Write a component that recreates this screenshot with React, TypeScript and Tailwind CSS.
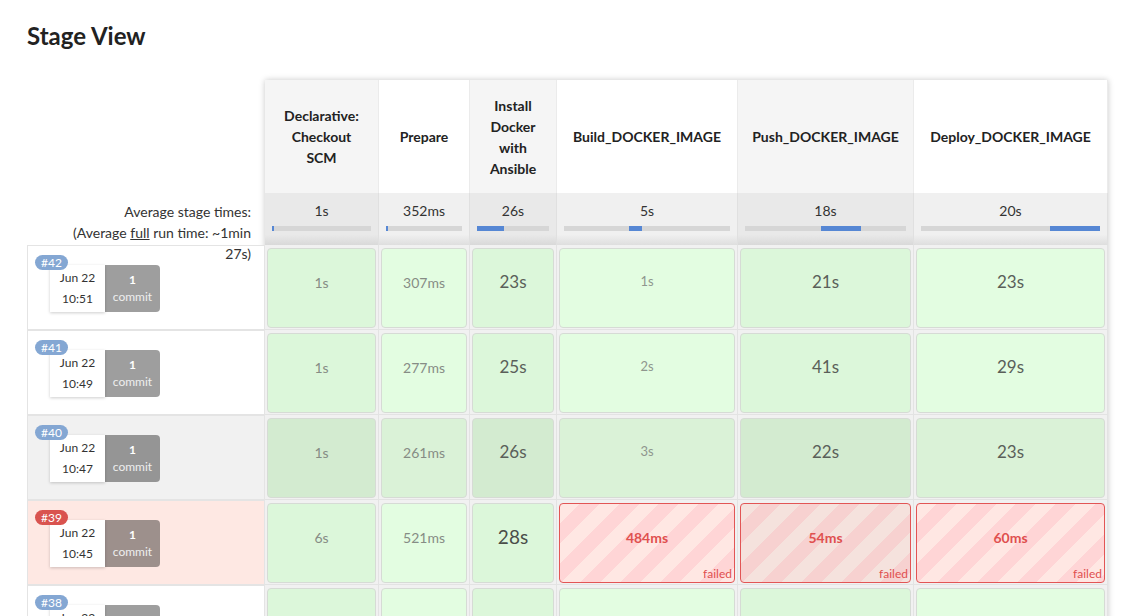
import React from "react";

type Stage = { name: string; w: string; avg: string; bar: [number, number]; odd: boolean };

const stages: Stage[] = [
  { name: "Declarative: Checkout SCM", w: "w-[114px]", avg: "1s", bar: [0, 0.02], odd: true },
  { name: "Prepare", w: "w-[91px]", avg: "352ms", bar: [0, 0.03], odd: false },
  { name: "Install Docker with Ansible", w: "w-[87px]", avg: "26s", bar: [0, 0.38], odd: true },
  { name: "Build_DOCKER_IMAGE", w: "w-[181px]", avg: "5s", bar: [0.39, 0.08], odd: false },
  { name: "Push_DOCKER_IMAGE", w: "w-[176px]", avg: "18s", bar: [0.47, 0.25], odd: true },
  { name: "Deploy_DOCKER_IMAGE", w: "w-[194px]", avg: "20s", bar: [0.72, 0.28], odd: false },
];

// s = tiny gray, m = gray, l = big, xl = bigger
type Cell = { t: string; size: "s" | "m" | "l" | "xl"; failed?: boolean };

type Run = {
  id: string;
  date: string;
  time: string;
  kind: "ok" | "hover" | "failed";
  cells: Cell[];
};

const runs: Run[] = [
  {
    id: "#42", date: "Jun 22", time: "10:51", kind: "ok",
    cells: [
      { t: "1s", size: "m" }, { t: "307ms", size: "m" }, { t: "23s", size: "l" },
      { t: "1s", size: "s" }, { t: "21s", size: "l" }, { t: "23s", size: "l" },
    ],
  },
  {
    id: "#41", date: "Jun 22", time: "10:49", kind: "ok",
    cells: [
      { t: "1s", size: "m" }, { t: "277ms", size: "m" }, { t: "25s", size: "l" },
      { t: "2s", size: "s" }, { t: "41s", size: "l" }, { t: "29s", size: "l" },
    ],
  },
  {
    id: "#40", date: "Jun 22", time: "10:47", kind: "hover",
    cells: [
      { t: "1s", size: "m" }, { t: "261ms", size: "m" }, { t: "26s", size: "l" },
      { t: "3s", size: "s" }, { t: "22s", size: "l" }, { t: "23s", size: "l" },
    ],
  },
  {
    id: "#39", date: "Jun 22", time: "10:45", kind: "failed",
    cells: [
      { t: "6s", size: "m" }, { t: "521ms", size: "m" }, { t: "28s", size: "xl" },
      { t: "484ms", size: "m", failed: true }, { t: "54ms", size: "m", failed: true }, { t: "60ms", size: "m", failed: true },
    ],
  },
  {
    // only the top of this row is on screen
    id: "#38", date: "Jun 22", time: "10:43", kind: "ok",
    cells: [
      { t: "", size: "m" }, { t: "", size: "m" }, { t: "", size: "l" },
      { t: "", size: "s" }, { t: "", size: "l" }, { t: "", size: "l" },
    ],
  },
];

const sizeCls = {
  s: "text-[13px] text-[#8f968e]",
  m: "text-[14px] text-[#868c85]",
  l: "text-[17px] text-[#5a5f59]",
  xl: "text-[19px] text-[#4a4e49]",
};

function RunLabel({ run }: { run: Run }) {
  const bg =
    run.kind === "hover" ? "bg-[#f1f1f1]" : run.kind === "failed" ? "bg-[#fee8e3]" : "bg-white";
  const badge = run.kind === "failed" ? "bg-[#d9534f]" : "bg-[#84a7d3]";
  return (
    <div className={`relative h-[85px] border border-[#e4e4e4] ${bg}`}>
      <span className={`absolute left-[7px] top-[9px] z-10 rounded-full px-[6px] text-[12px] leading-[15px] text-white ${badge}`}>
        {run.id}
      </span>
      <div className="ml-[22px] mt-[19px] flex h-[47px] w-[110px]">
        <div className="flex w-[55px] flex-col items-center justify-center gap-[7px] bg-white text-[12px] leading-[14px] text-[#333] shadow-[0_1px_3px_rgba(0,0,0,0.2)]">
          <span>{run.date}</span>
          <span>{run.time}</span>
        </div>
        <div className="flex w-[55px] flex-col items-center justify-center gap-[3px] rounded-r-[4px] bg-[rgba(0,0,0,0.38)] text-[12px] leading-[14px] text-[#eee]">
          <span className="font-bold text-white">1</span>
          <span>commit</span>
        </div>
      </div>
    </div>
  );
}

function StageCell({ cell, odd, dark }: { cell: Cell; odd: boolean; dark: boolean }) {
  if (cell.failed) {
    const stripes = odd
      ? "bg-[repeating-linear-gradient(135deg,#f5e2dd_0px,#f5e2dd_14px,#f7d1d0_14px,#f7d1d0_28px)]"
      : "bg-[repeating-linear-gradient(135deg,#ffe7e3_0px,#ffe7e3_14px,#ffd5d6_14px,#ffd5d6_28px)]";
    return (
      <div className={`relative flex h-full items-center justify-center rounded-[4px] border border-[#e25555] pb-[12px] ${stripes}`}>
        <span className="text-[14px] font-bold text-[#e0504f]">{cell.t}</span>
        <span className="absolute bottom-[2px] right-[2px] text-[12px] leading-[13px] text-[#e0504f]">failed</span>
      </div>
    );
  }
  const bg = dark
    ? odd ? "bg-[#d3ebd0]" : "bg-[#daf2d7]"
    : odd ? "bg-[#dcf7da]" : "bg-[#e3fde1]";
  return (
    <div className={`flex h-full items-center justify-center rounded-[4px] border border-[#d6dbd5] pb-[12px] ${bg}`}>
      <span className={sizeCls[cell.size]}>{cell.t}</span>
    </div>
  );
}

export default function App() {
  return (
    <div className="h-[616px] overflow-hidden bg-white pl-[27px] font-['Lato','Liberation_Sans',sans-serif] text-[#333]">
      <h2 className="pt-[21px] text-[24px] font-bold leading-[30px] text-[#222]">Stage View</h2>

      <div className="mt-[29px] flex">
        {/* run labels */}
        <div className="w-[238px] shrink-0">
          <div className="h-[113px]" />
          <div className="relative z-20 ml-auto h-[52px] w-[200px] pr-[14px] pt-[8px] text-right text-[14px] leading-[21px] text-[#333]">
            <div>Average stage times:</div>
            <div>
              (Average <span className="underline">full</span> run time: ~1min 27s)
            </div>
          </div>
          {runs.map((r) => (
            <RunLabel key={r.id} run={r} />
          ))}
        </div>

        {/* stages */}
        <div className="shadow-[0_0_6px_rgba(0,0,0,0.22)]">
          <div className="flex">
            {stages.map((s) => (
              <div
                key={s.name}
                className={`${s.w} flex h-[113px] items-center justify-center border-r border-[#ebebeb] px-2.5 text-center text-[14px] font-bold leading-[21px] text-[#222] ${s.odd ? "bg-[#f5f5f5]" : "bg-white"}`}
              >
                {s.name}
              </div>
            ))}
          </div>

          <div className="flex">
            {stages.map((s) => (
              <div
                key={s.name}
                className={`${s.w} h-[52px] border-r border-[#e0e0e0] px-[7px] pt-[8px] ${s.odd ? "bg-[linear-gradient(to_bottom,#e9e9e9_80%,#d9d9d9)]" : "bg-[linear-gradient(to_bottom,#f0f0f0_80%,#dedede)]"}`}
              >
                <div className="text-center text-[14px] leading-[20px] text-[#333]">{s.avg}</div>
                <div className="mt-[5px] flex h-[5px] bg-[#d6d6d6]">
                  <div style={{ width: `${s.bar[0] * 100}%` }} />
                  <div className="h-full bg-[#5687d4]" style={{ width: `${Math.max(s.bar[1] * 100, 2)}%` }} />
                </div>
              </div>
            ))}
          </div>

          {runs.map((r) => (
            <div key={r.id} className="flex bg-[#f1f1f1]">
              {stages.map((s, i) => (
                <div key={s.name} className={`${s.w} h-[85px] border-r border-b border-[#e3e3e3] px-[2px] pt-[3px] pb-[1px]`}>
                  <StageCell cell={r.cells[i]} odd={s.odd} dark={r.kind === "hover"} />
                </div>
              ))}
            </div>
          ))}
        </div>
      </div>
    </div>
  );
}
